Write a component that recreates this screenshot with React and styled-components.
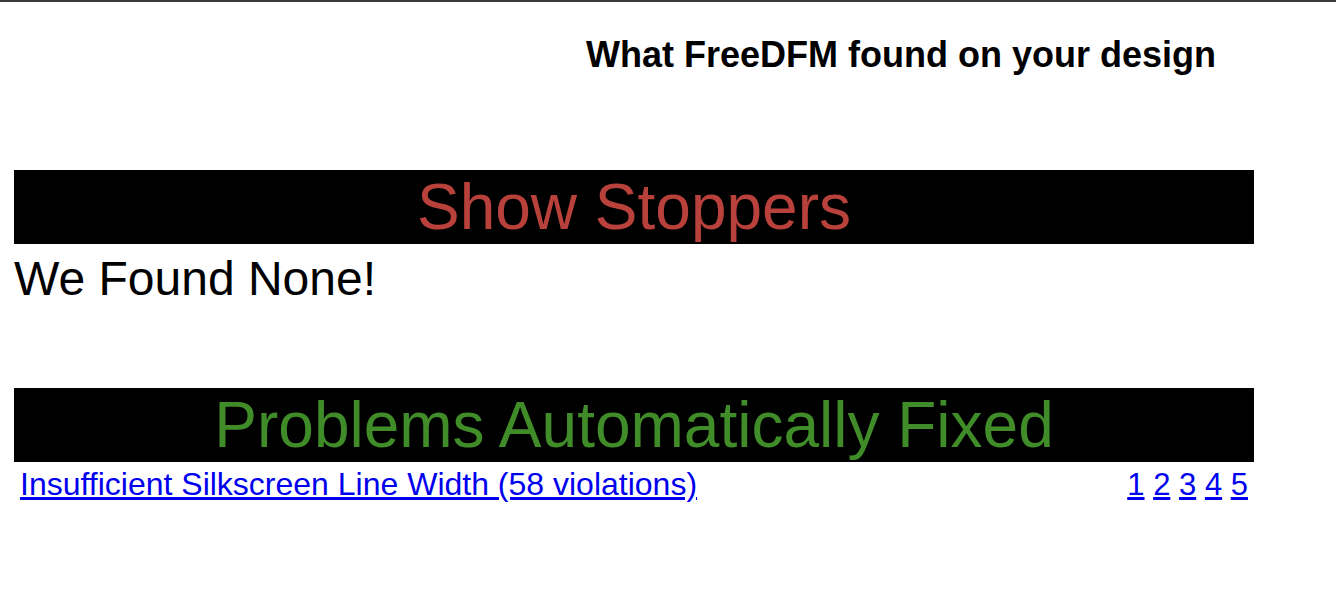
import React from "react";
import styled, { createGlobalStyle } from "styled-components";

const GlobalStyle = createGlobalStyle`
  html, body {
    margin: 0;
    padding: 0;
    background: #ffffff;
    font-family: "Liberation Sans", Arial, Helvetica, sans-serif;
    color: #000000;
  }
`;

const TopRule = styled.div`
  height: 2px;
  background: #3a3a3a;
`;

const Page = styled.main`
  width: 1240px;
  padding: 0 0 0 14px;
`;

const Header = styled.header`
  display: flex;
  justify-content: flex-end;
  padding: 32px 38px 94px 0;
`;

const Title = styled.h1`
  margin: 0;
  font-size: 36px;
  font-weight: bold;
  line-height: normal;
`;

const SectionBar = styled.h2`
  margin: 0;
  background: #000000;
  color: ${(p) => p.$tone};
  font-size: 64px;
  font-weight: normal;
  line-height: normal;
  text-align: center;
`;

const EmptyNote = styled.p`
  margin: 7px 0 82px;
  font-size: 48px;
  line-height: normal;
`;

const ProblemRow = styled.div`
  display: flex;
  justify-content: space-between;
  align-items: baseline;
  padding: 4px 6px 0;
  font-size: 32px;
  line-height: normal;
`;

const Link = styled.a`
  color: #0000ee;
  text-decoration: underline;
`;

const Pages = styled.div`
  white-space: pre;
  font-size: 31px;
`;

export default function App() {
  const pages = [1, 2, 3, 4, 5];
  return (
    <>
      <GlobalStyle />
      <TopRule />
      <Page>
        <Header>
          <Title>What FreeDFM found on your design</Title>
        </Header>
        <SectionBar $tone="#b8413b">Show Stoppers</SectionBar>
        <EmptyNote>We Found None!</EmptyNote>
        <SectionBar $tone="#3f8c28">Problems Automatically Fixed</SectionBar>
        <ProblemRow>
          <Link href="#silkscreen">Insufficient Silkscreen Line Width (58 violations)</Link>
          <Pages>
            {pages.map((n, i) => (
              <React.Fragment key={n}>
                {i > 0 && " "}
                <Link href={`#page-${n}`}>{n}</Link>
              </React.Fragment>
            ))}
          </Pages>
        </ProblemRow>
      </Page>
    </>
  );
}
